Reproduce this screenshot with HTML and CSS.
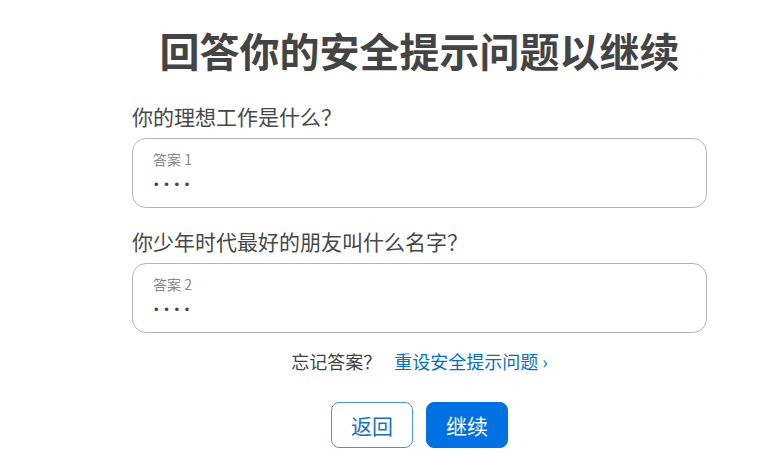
FILE: index.html
```html
<!DOCTYPE html>
<html lang="zh-CN">
<head>
    <meta charset="UTF-8">
    <meta name="viewport" content="width=device-width, initial-scale=1.0">
    <title>回答你的安全提示问题以继续</title>
    <link rel="stylesheet" href="styles.css">
</head>
<body>

<div class="panel">
    <h1 class="title">回答你的安全提示问题以继续</h1>

    <form class="answers">
        <div class="question">你的理想工作是什么？</div>
        <label class="field">
            <span class="field-label">答案 1</span>
            <input class="field-input" type="password" value="abcd">
        </label>

        <div class="question">你少年时代最好的朋友叫什么名字？</div>
        <label class="field">
            <span class="field-label">答案 2</span>
            <input class="field-input" type="password" value="abcd">
        </label>

        <div class="forgot">
            <span>忘记答案？</span>
            <a class="reset-link" href="#">重设安全提示问题 ›</a>
        </div>

        <div class="actions">
            <button type="button" class="btn btn-back">返回</button>
            <button type="submit" class="btn btn-next">继续</button>
        </div>
    </form>
</div>

</body>
</html>
```

FILE: styles.css
```css
body {
    margin: 0;
    background: #fff;
    font-family: "Noto Sans CJK SC", "Noto Sans", sans-serif;
    color: #333;
}
.panel {
    width: 575px;
    margin-left: 132px;
    padding-top: 22px;
}
.title {
    margin: 0 0 24px;
    text-align: center;
    font-size: 40px;
    line-height: 56px;
    font-weight: 700;
    color: #444;
}
.question {
    font-size: 21px;
    line-height: 28px;
    color: #484848;
    margin-bottom: 8px;
}
.field {
    display: flex;
    flex-direction: column;
    height: 70px;
    box-sizing: border-box;
    border: 1px solid #b5b5b5;
    border-radius: 14px;
    padding: 11px 20px 0;
    margin-bottom: 19px;
}
.field-label {
    font-size: 14px;
    line-height: 18px;
    color: #888;
}
.field-input {
    border: none;
    outline: none;
    padding: 0 0 0 1px;
    margin-top: 9px;
    font-size: 13px;
    letter-spacing: 5.7px;
    color: #444;
    background: transparent;
    font-family: "Liberation Sans", sans-serif;
}
.forgot {
    text-align: center;
    font-size: 18px;
    line-height: 24px;
    color: #444;
    margin-top: -3px;
}
.reset-link {
    margin-left: 9px;
    color: #0070c9;
    text-decoration: none;
}
.actions {
    display: flex;
    justify-content: center;
    gap: 13px;
    margin-top: 29px;
}
.btn {
    height: 46px;
    width: 82px;
    border-radius: 8px;
    font-size: 21px;
    font-family: "Noto Sans CJK SC", sans-serif;
    cursor: pointer;
}
.btn-back {
    background: #fff;
    border: 1px solid #4a90dc;
    color: #1a6fc4;
}
.btn-next {
    background: #0071e3;
    border: 1px solid #0071e3;
    color: #fff;
}
```
